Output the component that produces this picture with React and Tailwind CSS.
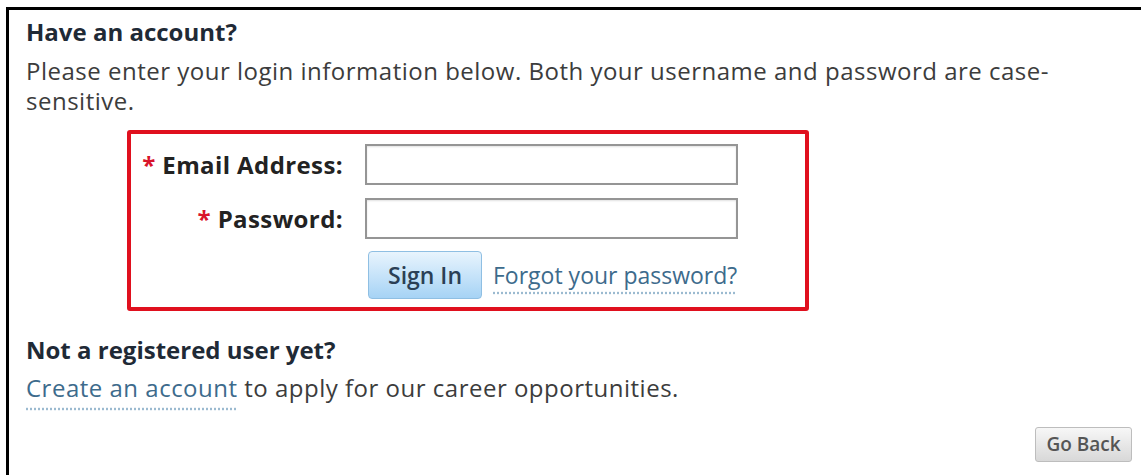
import React from "react";

const font = { fontFamily: '"Open Sans", "Liberation Sans", sans-serif' };

function Field({ label, top }) {
  return (
    <div className={`flex items-center gap-[22px] ${top}`}>
      <label className="w-[212px] text-right text-[24px] font-bold tracking-[0.4px] text-[#222]">
        <span className="text-[#d9142b]">*</span> {label}
      </label>
      <input
        type="text"
        className="h-[41px] w-[373px] border-2 border-[#959595] bg-white shadow-[inset_0_1px_2px_rgba(0,0,0,0.12)] outline-none"
      />
    </div>
  );
}

export default function App() {
  return (
    <div
      className="flex h-[475px] w-[1141px] overflow-hidden bg-white pl-[6px] pt-[7px]"
      style={font}
    >
      <div className="flex flex-1 flex-col border-l-[3px] border-t-[3px] border-black pl-[17px] pt-[7px] pr-[9px] leading-[30px]">
        {/* Sign-in section */}
        <h2 className="text-[24px] font-bold text-[#1f2a36]">Have an account?</h2>
        <p className="mt-[9px] text-[24px] tracking-[0.5px] text-[#3c3c3c]">
          Please enter your login information below. Both your username and password are case-
          <br />
          sensitive.
        </p>

        <div className="ml-[101px] mt-[14px] w-[682px] rounded-[3px] border-4 border-[#e0101e] pb-[8px] pt-[10px]">
          <Field label="Email Address:" top="" />
          <Field label="Password:" top="mt-[13px]" />
          <div className="mt-[12px] flex items-center pl-[237px]">
            <button className="h-[48px] w-[114px] rounded-[4px] border border-[#8fbfe3] bg-gradient-to-b from-[#e8f4fd] to-[#a6d3f5] text-[23px] font-semibold text-[#2b3f55]">
              Sign In
            </button>
            <a
              href="#"
              className="ml-[11px] text-[23px] text-[#3d6b8c] underline decoration-[#9bbad0] decoration-dotted underline-offset-[8px]"
            >
              Forgot your password?
            </a>
          </div>
        </div>

        {/* Registration section */}
        <h2 className="mt-[24px] text-[24px] font-bold text-[#1f2a36]">
          Not a registered user yet?
        </h2>
        <p className="mt-[8px] text-[24px] tracking-[0.5px] text-[#3c3c3c]">
          <a
            href="#"
            className="text-[#3d6b8c] underline decoration-[#9bbad0] decoration-dotted underline-offset-[11px]"
          >
            Create an account
          </a>{" "}
          to apply for our career opportunities.
        </p>

        <div className="mt-[24px] flex justify-end">
          <button className="h-[35px] w-[97px] rounded-[3px] border border-[#bdbdbd] bg-gradient-to-b from-[#f7f7f7] to-[#d8d8d8] text-[19px] font-semibold leading-none text-[#555]">
            Go Back
          </button>
        </div>
      </div>
    </div>
  );
}
